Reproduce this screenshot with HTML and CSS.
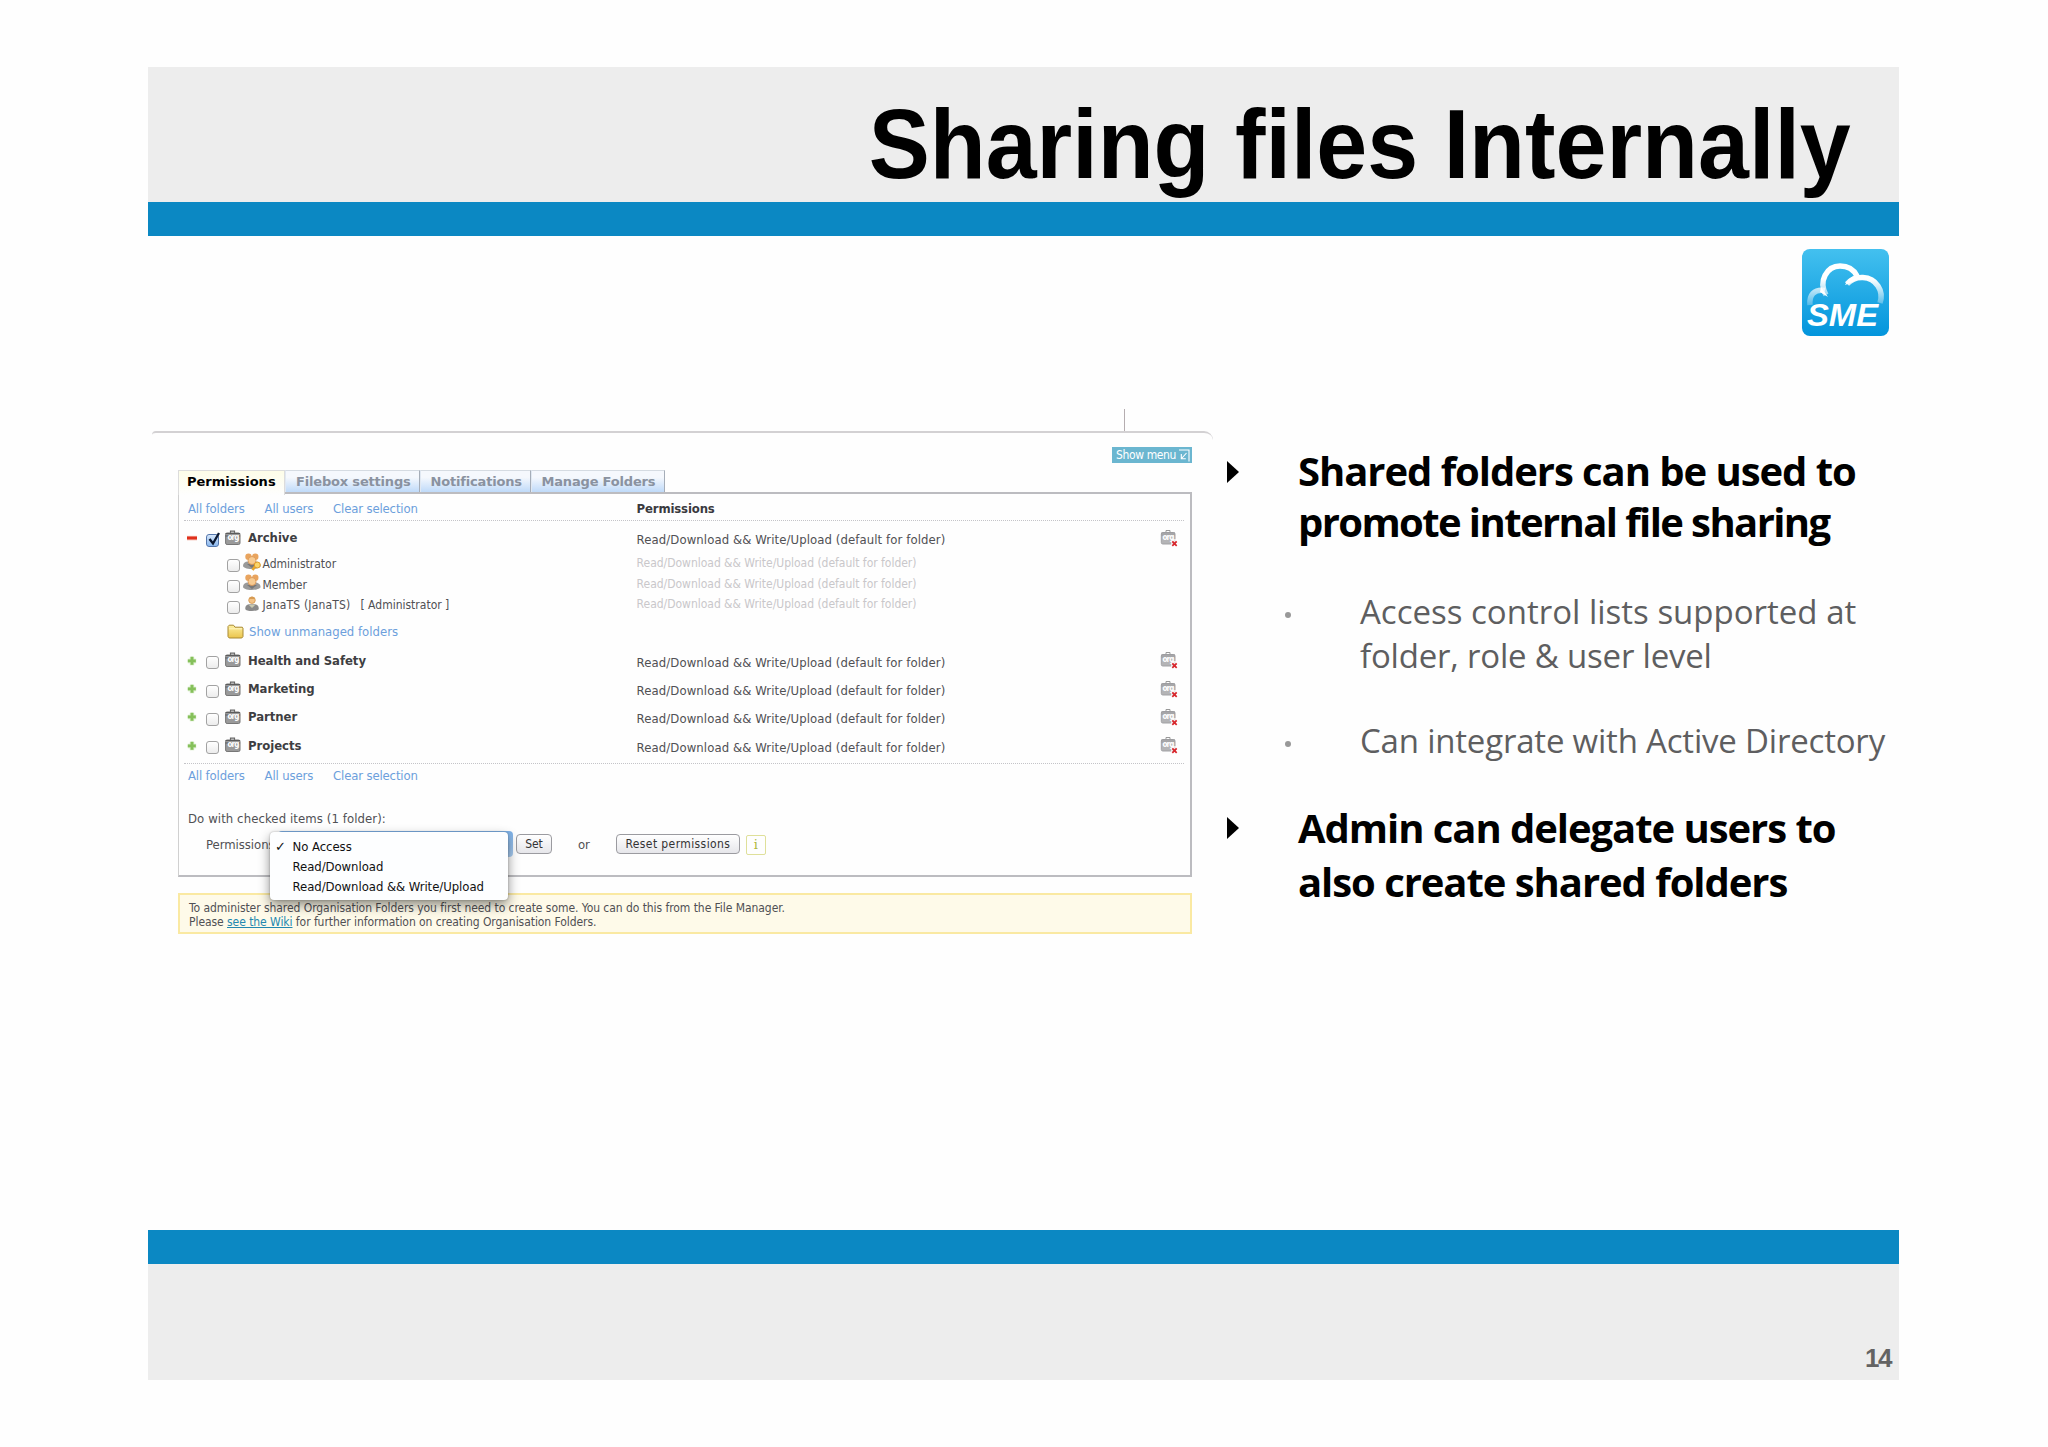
FILE: index.html
```html
<!DOCTYPE html>
<html lang="en">
<head>
  <meta charset="UTF-8">
  <title>Sharing files Internally</title>
  <link rel="stylesheet" href="styles.css">
</head>
<body>
  <!-- Icon set -->
  <svg class="sprite" width="0" height="0">
    <defs>
      <linearGradient id="sky" x1="0" y1="0" x2="0" y2="1">
        <stop offset="0" stop-color="#43c0ef"/>
        <stop offset="1" stop-color="#0395dc"/>
      </linearGradient>
      <linearGradient id="fade" gradientUnits="userSpaceOnUse" x1="0" y1="30" x2="0" y2="56">
        <stop offset="0" stop-color="#fff"/>
        <stop offset="1" stop-color="#fff" stop-opacity="0.25"/>
      </linearGradient>
      <linearGradient id="gold" x1="0" y1="0" x2="0" y2="1">
        <stop offset="0" stop-color="#fdf0a0"/>
        <stop offset="1" stop-color="#eac44c"/>
      </linearGradient>
    </defs>
    <symbol id="org" viewBox="0 0 18 16">
      <path d="M6.5 3V1.2h4V3" fill="none" stroke="#666" stroke-width="1.2"/>
      <rect x="1.6" y="3" width="14.4" height="11.5" rx="1.5" fill="#9a9a9a" stroke="#777"/>
      <path d="M1.500 3.500h14.600M1.500 6h14.600" stroke="#5c5c5c" stroke-width="1.100"/>
    </symbol>
    <symbol id="org-del" viewBox="0 0 18 18">
      <path d="M6 3.5V1.5h4v2" fill="none" stroke="#999"/>
      <rect x="1.3" y="3.5" width="13.7" height="11.5" rx="1.5" fill="#b4b4b6" stroke="#a2a2a5"/>
      <path d="M1.300 4h13.700M1.300 6H15" stroke="#98989b"/>
    </symbol>
    <symbol id="cross" viewBox="0 0 8 8">
      <path d="M1 0h7v8H1z" fill="#fff" opacity="0.7"/>
      <path d="M2.300 2.300l4.400 4.600m0-4.600l-4.400 4.600" stroke="#d8262c" stroke-width="1.700"/>
    </symbol>
    <symbol id="plus" viewBox="0 0 10 10">
      <path d="M5 .8v8.4M.8 5h8.4" stroke="#d3e9c2" stroke-width="4.4"/>
      <path d="M5 .8v8M.8 4.9h8" stroke="#85c05a" stroke-width="2.8"/>
    </symbol>
    <symbol id="minus" viewBox="0 0 10 10">
      <rect y="2.8" width="10" height="4.6" fill="#f6c5bb"/>
      <rect y="3.5" width="10" height="3" fill="#e0301c"/>
    </symbol>
    <symbol id="group" viewBox="0 0 18 18">
      <path d="M0 13c0-3 2-4.500 5-4.500h7c3 0 5.500 1.500 5.500 4.500 0 1.500-4 3-9 3s-8.500-1.500-8.500-3z" fill="#999"/>
      <path d="M4 11l5 4 5-4z" fill="#777"/>
      <circle cx="5.500" cy="3.800" r="3.200" fill="#e9a45e"/>
      <circle cx="12.300" cy="3.800" r="3.200" fill="#e9a45e"/>
      <circle cx="9" cy="7.500" r="4" fill="#f7cb92" stroke="#d99350" stroke-width=".8"/>
    </symbol>
    <symbol id="admin" viewBox="0 0 18 18">
      <use href="#group"/>
      <path d="M13.500 11.500l-4 5.500" stroke="#e8a52a" stroke-width="2.600"/>
      <circle cx="14.300" cy="12" r="3" fill="#fbd56a" stroke="#e09b28"/>
    </symbol>
    <symbol id="user" viewBox="0 0 14 16">
      <path d="M1 13c0-3 2-4 4-4h4c2 0 4 1 4 4 0 1.500-3 2-6 2s-6-.5-6-2z" fill="#8a8a8a"/>
      <path d="M4 9.500h6l-3 3z" fill="#c9c9b0"/>
      <circle cx="7" cy="5.500" r="2.900" fill="#f3c285" stroke="#d59a55" stroke-width=".8"/>
      <path d="M4.300 4.500a2.800 2.800 0 0 1 5.400 0z" fill="#d79b52"/>
    </symbol>
    <symbol id="folder" viewBox="0 0 17 15">
      <path d="M1 12.500V2.500l1.200-1.300h4.300l1.500 2h7.300l.7 1v8.300l-1.200 1.500H2.200z" fill="url(#gold)" stroke="#a88932"/>
      <path d="M2 4.800h13" stroke="#fff6c4"/>
    </symbol>
    <symbol id="tick" viewBox="0 0 14 16">
      <path d="M2.500 8l3.500 4.500L12 2" fill="none" stroke="#0b1830" stroke-width="2.300"/>
    </symbol>
  </svg>

  <div class="slide">
    <header class="slide-header">
      <h1 class="title">Sharing files Internally</h1>
    </header>

    <main class="slide-body">
      <section class="screen">
        <div class="divider-tick"></div>
        <div class="frame">
          <div class="show-menu">Show menu
            <svg width="11" height="13" viewBox="0 0 11 13"><path d="M0 1h10v11.500M7.500 4L2.500 9.500M2.300 5v4.700h4.500" fill="none" stroke="#fff" stroke-width="1.100"/></svg>
          </div>

          <nav class="tabs">
            <span class="tab active">Permissions</span>
            <span class="tab wide">Filebox settings</span>
            <span class="tab">Notifications</span>
            <span class="tab wide">Manage Folders</span>
          </nav>

          <div class="panel">
            <div class="row links top">
              <div class="name"><a>All folders</a><a>All users</a><a>Clear selection</a></div>
              <div class="perm">Permissions</div>
            </div>

            <div class="row folder open">
              <div class="name">
                <svg class="toggle"><use href="#minus"/></svg>
                <span class="check checked"><svg class="tick"><use href="#tick"/></svg></span>
                <span class="org"><svg><use href="#org"/></svg><em>org</em></span>
                <b>Archive</b>
              </div>
              <div class="perm">Read/Download &amp;&amp; Write/Upload (default for folder)</div>
              <span class="org del"><svg><use href="#org-del"/></svg><em>org</em><svg class="cross"><use href="#cross"/></svg></span>
            </div>
            <div class="members">
              <div class="row member">
                <div class="name"><span class="check"></span><svg class="who"><use href="#admin"/></svg>Administrator</div>
                <div class="perm">Read/Download &amp;&amp; Write/Upload (default for folder)</div>
              </div>
              <div class="row member">
                <div class="name"><span class="check"></span><svg class="who"><use href="#group"/></svg>Member</div>
                <div class="perm">Read/Download &amp;&amp; Write/Upload (default for folder)</div>
              </div>
              <div class="row member">
                <div class="name"><span class="check"></span><svg class="who"><use href="#user"/></svg><span class="login">JanaTS (JanaTS)</span>[ Administrator ]</div>
                <div class="perm">Read/Download &amp;&amp; Write/Upload (default for folder)</div>
              </div>
            </div>
            <div class="row unmanaged">
              <svg width="17" height="15"><use href="#folder"/></svg>
              <a>Show unmanaged folders</a>
            </div>

            <div class="row folder">
              <div class="name"><svg class="toggle"><use href="#plus"/></svg><span class="check"></span><span class="org"><svg><use href="#org"/></svg><em>org</em></span><b>Health and Safety</b></div>
              <div class="perm">Read/Download &amp;&amp; Write/Upload (default for folder)</div>
              <span class="org del"><svg><use href="#org-del"/></svg><em>org</em><svg class="cross"><use href="#cross"/></svg></span>
            </div>
            <div class="row folder">
              <div class="name"><svg class="toggle"><use href="#plus"/></svg><span class="check"></span><span class="org"><svg><use href="#org"/></svg><em>org</em></span><b>Marketing</b></div>
              <div class="perm">Read/Download &amp;&amp; Write/Upload (default for folder)</div>
              <span class="org del"><svg><use href="#org-del"/></svg><em>org</em><svg class="cross"><use href="#cross"/></svg></span>
            </div>
            <div class="row folder">
              <div class="name"><svg class="toggle"><use href="#plus"/></svg><span class="check"></span><span class="org"><svg><use href="#org"/></svg><em>org</em></span><b>Partner</b></div>
              <div class="perm">Read/Download &amp;&amp; Write/Upload (default for folder)</div>
              <span class="org del"><svg><use href="#org-del"/></svg><em>org</em><svg class="cross"><use href="#cross"/></svg></span>
            </div>
            <div class="row folder">
              <div class="name"><svg class="toggle"><use href="#plus"/></svg><span class="check"></span><span class="org"><svg><use href="#org"/></svg><em>org</em></span><b>Projects</b></div>
              <div class="perm">Read/Download &amp;&amp; Write/Upload (default for folder)</div>
              <span class="org del"><svg><use href="#org-del"/></svg><em>org</em><svg class="cross"><use href="#cross"/></svg></span>
            </div>

            <div class="row links bottom">
              <div class="name"><a>All folders</a><a>All users</a><a>Clear selection</a></div>
            </div>

            <div class="bulk-label">Do with checked items (1 folder):</div>
            <div class="bulk">
              <span class="bulk-name">Permissions:</span>
              <div class="select">
                <div class="menu">
                  <div class="option selected"><span class="mark">✓</span>No Access</div>
                  <div class="option"><span class="mark"></span>Read/Download</div>
                  <div class="option"><span class="mark"></span>Read/Download &amp;&amp; Write/Upload</div>
                </div>
              </div>
              <span class="btn set">Set</span>
              <span class="or">or</span>
              <span class="btn reset">Reset permissions</span>
              <span class="info">i</span>
            </div>
          </div>

          <div class="note">
            To administer shared Organisation Folders you first need to create some. You can do this from the File Manager.<br>
            Please <a>see the Wiki</a> for further information on creating Organisation Folders.
          </div>
        </div>
      </section>

      <section class="points">
        <svg class="logo" viewBox="0 0 87 87">
          <rect width="87" height="87" rx="8" fill="url(#sky)"/>
          <g fill="none" stroke="url(#fade)" stroke-width="5.500">
            <path d="M8 56C7 46 12 40 23 41.500"/>
            <path d="M24 46C16 32 25 17 38 17c8 0 14 4 17 10"/>
            <path d="M45 35c8-9 24-9 31 2 4 6 4 11 2 17"/>
          </g>
          <path d="M19 38l7 10-8-5zM43 36c4-8 9-10 16-10l-6 6z" fill="#fff"/>
          <text x="5" y="77" textLength="71" lengthAdjust="spacingAndGlyphs" class="logo-text">SME</text>
        </svg>

        <ul class="list">
          <li class="point first">
            <svg class="arrow" viewBox="0 0 12 22"><path d="M0 0l12 11L0 22z"/></svg>
            <div>Shared folders can be used to<br><span class="tight">promote internal file sharing</span></div>
          </li>
          <li class="sub two-lines">
            <i class="dot"></i>
            <div>Access control lists supported at<br><span class="tight">folder, role &amp; user level</span></div>
          </li>
          <li class="sub"><i class="dot"></i><div class="tight">Can integrate with Active Directory</div></li>
          <li class="point second">
            <svg class="arrow" viewBox="0 0 12 22"><path d="M0 0l12 11L0 22z"/></svg>
            <div>Admin can delegate users to<br>also create shared folders</div>
          </li>
        </ul>
      </section>
    </main>

    <footer class="slide-footer"><span class="page">14</span></footer>
  </div>
</body>
</html>
```
FILE: styles.css
```css
* {
  margin: 0;
  padding: 0;
  box-sizing: border-box;
}

body {
  width: 2048px;
  height: 1447px;
  padding: 67px 0 0 148px;
  background-color: #fefefe;
  font-family: "DejaVu Sans Condensed", "DejaVu Sans", sans-serif;
  font-size: 13px;
  color: #505054;
  overflow: hidden;
}

svg {
  display: block;
  flex: none;
}

.sprite {
  position: absolute;
}

.slide {
  width: 1751px;
}

.slide-header {
  display: flex;
  justify-content: flex-end;
  height: 169px;
  padding: 9px 48px 0 0;
  background-color: #ededed;
  border-bottom: 34px solid #0b88c3;
}

.title {
  font-family: "Liberation Sans", Arial, sans-serif;
  font-size: 99px;
  line-height: 135px;
  font-weight: 700;
  color: #000;
  white-space: nowrap;
  transform: scaleX(0.925);
  transform-origin: right;
}

.slide-body {
  display: flex;
  height: 994px;
}

.slide-footer {
  display: flex;
  justify-content: flex-end;
  align-items: flex-end;
  height: 150px;
  padding: 0 8px 7px 0;
  background-color: #ededed;
  border-top: 34px solid #0b88c3;
}

.page {
  font-family: "Liberation Sans", sans-serif;
  font-size: 26px;
  font-weight: 700;
  line-height: 30px;
  letter-spacing: -1.5px;
  color: #636363;
}

/* Screen on the left */
.screen {
  width: 1065px;
  padding-top: 173px;
}

.divider-tick {
  width: 1px;
  height: 22px;
  margin-left: 976px;
  background-color: #b5adb0;
}

.frame {
  display: flex;
  flex-direction: column;
  margin-left: 4px;
  padding: 14px 21px 0 26px;
  border-top: 2px solid #d3d1d3;
  border-radius: 4px 9px 0 0;
}

.show-menu {
  display: flex;
  align-items: center;
  gap: 3px;
  align-self: flex-end;
  width: 80px;
  height: 16px;
  padding-left: 4px;
  background-color: #6bb6d0;
  color: #fff;
  font-size: 12px;
  letter-spacing: -0.38px;
  white-space: nowrap;
}

.tabs {
  display: flex;
  height: 22px;
  margin-top: 7px;
}

.tab {
  width: 111px;
  height: 23px;
  padding-left: 10px;
  border: 1px solid #a5adb8;
  border-top-color: #d5dbe2;
  border-left-color: #e0e8f2;
  background: linear-gradient(#f5f8fd 30%, #bfdaf9);
  font-family: "DejaVu Sans", sans-serif;
  font-weight: 700;
  font-size: 13px;
  line-height: 21px;
  letter-spacing: -0.18px;
  color: #8a92a0;
  white-space: nowrap;
}

.tab.wide {
  width: 134.5px;
}

.tab.active {
  position: relative;
  z-index: 1;
  width: 107px;
  height: 25px;
  padding-left: 8px;
  border-color: #dcdcdc;
  border-bottom: none;
  background: linear-gradient(#fdfde8, #fefefe);
  letter-spacing: 0;
  color: #000;
}

.panel {
  height: 385px;
  padding: 0 6px 0 5px;
  border: 2px solid #bcbcc0;
  border-left: 1px solid #d0d0d0;
}

.row {
  display: flex;
  align-items: center;
}

.name {
  display: flex;
  align-items: center;
  width: 452.6px;
}

.perm {
  flex: 1;
  white-space: nowrap;
}

a {
  color: #6c9fdc;
}

.links {
  padding-left: 4px;
  letter-spacing: -0.15px;
}

.links .name {
  gap: 20px;
  width: 448.6px;
}

.links .perm {
  font-weight: 700;
  color: #3a3a3e;
}

.links.top {
  height: 27px;
  padding-top: 3px;
  border-bottom: 1px dotted #c4c4c8;
}

.links.bottom {
  height: 24px;
  margin-top: 4px;
  border-top: 1px dotted #c4c4c8;
}

.folder {
  height: 28.3px;
}

.folder.open {
  height: 31px;
  padding-top: 2px;
}

.folder .name {
  padding-left: 3px;
}

.folder .perm {
  padding-top: 4px;
  letter-spacing: 0.09px;
}

.folder b {
  color: #3e3e42;
  letter-spacing: -0.05px;
}

.toggle {
  width: 10px;
  height: 10px;
  margin: 1px 9px 0 0;
}

.check {
  flex: none;
  width: 13px;
  height: 13px;
  border: 1px solid #a2a2a2;
  border-radius: 3px;
  background: linear-gradient(#fff, #ececec);
}

.folder .check {
  margin: 5px 5px 0 0;
}

.check.checked {
  border-color: #5577ad;
  background: linear-gradient(#d5e6fa, #8cb9ef);
}

.tick {
  width: 14px;
  height: 16px;
  margin-top: -4px;
}

.org {
  position: relative;
  flex: none;
  width: 18px;
  height: 16px;
  margin-right: 6px;
}

.org svg {
  width: 18px;
  height: 16px;
}

.org em {
  position: absolute;
  top: 3px;
  left: 2px;
  width: 14px;
  font: 700 8px/10px "DejaVu Sans Condensed", sans-serif;
  letter-spacing: -0.8px;
  text-align: center;
  color: #fff;
}

.org.del,
.org.del svg {
  height: 18px;
}

.org.del em {
  top: 4px;
  left: 1px;
}

.org.del .cross {
  position: absolute;
  right: 0;
  bottom: 0;
  width: 8px;
  height: 8px;
}

.members {
  padding-top: 1.6px;
  margin-bottom: 0.6px;
}

.member {
  height: 20.7px;
  font-size: 12px;
}

.member .name {
  padding-left: 43px;
}

.member .perm {
  padding-bottom: 2px;
  letter-spacing: -0.02px;
  color: #c9c7ca;
}

.member .check {
  margin: 4px 3px 0 0;
}

.who {
  width: 18px;
  height: 18px;
  margin: -4px 1.5px 0 0;
}

.login {
  margin-right: 10px;
  letter-spacing: 0.18px;
}

.unmanaged {
  gap: 5px;
  height: 29.9px;
  padding-left: 43px;
}

.bulk-label {
  height: 20px;
  margin-top: 22px;
  padding-left: 4px;
  line-height: 20px;
  letter-spacing: 0.09px;
}

.bulk {
  display: flex;
  align-items: center;
  height: 30px;
  padding-left: 22px;
  letter-spacing: -0.05px;
}

.bulk-name {
  width: 72px;
}

.select {
  position: relative;
  width: 235px;
  height: 26px;
  border-radius: 4px;
  background: linear-gradient(#7db0e6, #a9cdf2);
}

.menu {
  position: absolute;
  top: 1px;
  left: -8px;
  width: 238px;
  height: 68px;
  padding: 5px 0 0 5px;
  border-radius: 4px;
  background-color: #fdfeff;
  box-shadow: 0 5px 12px rgba(0, 0, 0, 0.45), 0 0 2px rgba(0, 0, 0, 0.3);
  color: #111;
}

.option {
  display: flex;
  height: 19.7px;
  line-height: 19.7px;
}

.mark {
  width: 17.5px;
  font-family: "DejaVu Sans", sans-serif;
  font-weight: 700;
}

.btn {
  height: 20px;
  border: 1px solid #9b9ba0;
  border-radius: 4px;
  background: linear-gradient(#fff, #e6e6ea);
  font-size: 12px;
  line-height: 18px;
  text-align: center;
  color: #333;
}

.set {
  width: 36px;
  margin-left: 3px;
}

.or {
  margin: 0 26px 0 26px;
}

.reset {
  width: 124px;
  letter-spacing: 0.4px;
}

.info {
  width: 20px;
  height: 20px;
  margin: 2px 0 0 6px;
  border: 1px solid #dfe09a;
  border-radius: 2px;
  font-family: "DejaVu Serif", serif;
  line-height: 18px;
  text-align: center;
  color: #adb83a;
}

.note {
  height: 41px;
  margin-top: 16px;
  padding: 6px 0 0 9px;
  border: 2px solid #fae9a2;
  background-color: #fefae9;
  font-size: 12px;
  line-height: 14.3px;
  letter-spacing: -0.06px;
}

.note a {
  color: #2288b0;
  text-decoration: underline;
}

/* Talking points on the right */
.points {
  display: flex;
  flex-direction: column;
  flex: 1;
  padding-top: 13px;
}

.logo {
  align-self: flex-end;
  width: 87px;
  height: 87px;
  margin-right: 10px;
}

.logo-text {
  font: italic 700 32px "Liberation Sans", sans-serif;
  fill: #fff;
}

.list {
  padding: 109px 0 0 14px;
  list-style: none;
  font-family: "Open Sans", sans-serif;
  white-space: nowrap;
}

.point {
  display: flex;
  font-size: 40px;
  font-weight: 700;
  line-height: 51px;
  letter-spacing: -1.05px;
  color: #000;
}

.point .tight {
  letter-spacing: -1.6px;
}

.point.second {
  margin-top: 38px;
  line-height: 54px;
}

.arrow {
  width: 12px;
  height: 22px;
  margin: 16px 59px 0 0;
}

.sub {
  display: flex;
  margin-top: 41px;
  padding-left: 58px;
  font-size: 33px;
  line-height: 44px;
  color: #5e5e60;
}

.sub.two-lines {
  margin-top: 43px;
}

.sub .tight,
.sub > .tight {
  letter-spacing: -0.2px;
}

.dot {
  width: 6px;
  height: 6px;
  margin: 22px 69px 0 0;
  border-radius: 50%;
  background-color: #999;
}
```
